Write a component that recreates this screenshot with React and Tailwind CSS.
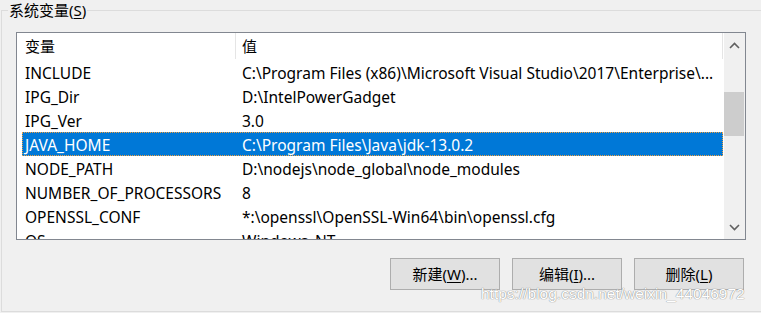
import React from "react";

const rows = [
  ["INCLUDE", "C:\\Program Files (x86)\\Microsoft Visual Studio\\2017\\Enterprise\\..."],
  ["IPG_Dir", "D:\\IntelPowerGadget"],
  ["IPG_Ver", "3.0"],
  ["JAVA_HOME", "C:\\Program Files\\Java\\jdk-13.0.2"],
  ["NODE_PATH", "D:\\nodejs\\node_global\\node_modules"],
  ["NUMBER_OF_PROCESSORS", "8"],
  ["OPENSSL_CONF", "*:\\openssl\\OpenSSL-Win64\\bin\\openssl.cfg"],
  ["OS", "Windows_NT"],
];

function Btn({ children }) {
  return (
    <div className="w-[110px] h-[32px] bg-[#e1e1e1] border border-[#adadad] flex items-center justify-center text-[15px] text-black">
      {children}
    </div>
  );
}

export default function App() {
  return (
    <div
      className="relative w-[761px] h-[313px] overflow-hidden bg-[#f0f0f0] text-black"
      style={{ fontFamily: '"Noto Sans", "Noto Sans CJK SC", sans-serif' }}
    >
      <div className="relative mt-[10px] ml-[1px] h-[302px] w-[800px] border border-[#dcdcdc]">
        <div className="absolute left-[6px] top-[-11px] bg-[#f0f0f0] px-[1px] text-[15px] leading-[20px]">
          系统变量(<span className="underline underline-offset-2">S</span>)
        </div>
        <div className="ml-[14px] mt-[21px] w-[730px] h-[208px] border border-[#828790] bg-white flex overflow-hidden">
          <div className="flex-1 flex flex-col overflow-hidden text-[15.5px]">
            <div className="h-[27px] shrink-0 flex items-center relative text-[15px]">
              <div className="w-[218px] pl-[8px]">变量</div>
              <div className="w-px h-[26px] self-start bg-[#e5e5e5]" />
              <div className="pl-[6px] flex-1">值</div>
              <div className="w-px h-[26px] self-start bg-[#e5e5e5] mr-[1px]" />
            </div>
            {rows.map(([k, v], i) => {
              const sel = k === "JAVA_HOME";
              return (
                <div
                  key={i}
                  className={
                    "ml-[5px] mr-[1px] h-[24px] shrink-0 flex items-start leading-[24px] whitespace-nowrap " +
                    (sel
                      ? "bg-[#0078d7] text-white border border-dotted border-[#f0a040]"
                      : "border border-transparent")
                  }
                >
                  <div className="w-[219px] pl-[2px]">{k}</div>
                  <div className="flex-1">{v}</div>
                </div>
              );
            })}
          </div>
          <div className="w-[21px] shrink-0 bg-[#f0f0f0] flex flex-col">
            <div className="h-[24px] flex items-center justify-center">
              <svg width="11" height="7" viewBox="0 0 11 7">
                <polyline points="1,6 5.5,1.5 10,6" fill="none" stroke="#606060" strokeWidth="1.6" />
              </svg>
            </div>
            <div className="h-[35px]" />
            <div className="h-[44px] bg-[#cdcdcd] mr-[1px]" />
            <div className="flex-1" />
            <div className="h-[24px] flex items-center justify-center">
              <svg width="11" height="7" viewBox="0 0 11 7">
                <polyline points="1,1 5.5,5.5 10,1" fill="none" stroke="#606060" strokeWidth="1.6" />
              </svg>
            </div>
          </div>
        </div>
        <div className="ml-[388px] mt-[18px] flex gap-[12px]">
          <Btn>
            新建(<span className="underline underline-offset-2">W</span>)...
          </Btn>
          <Btn>
            编辑(<span className="underline underline-offset-2">I</span>)...
          </Btn>
          <Btn>
            删除(<span className="underline underline-offset-2">L</span>)
          </Btn>
        </div>
      </div>
      <div
        className="absolute left-[481px] top-[285px] text-[15.5px] leading-[18px] text-white [text-shadow:0_0_1px_#8a8a8a,0_0_1px_#8a8a8a] whitespace-nowrap"
        style={{ fontFamily: '"Liberation Sans", Arial, sans-serif' }}
      >
        https://blog.csdn.net/weixin_44046972
      </div>
    </div>
  );
}
